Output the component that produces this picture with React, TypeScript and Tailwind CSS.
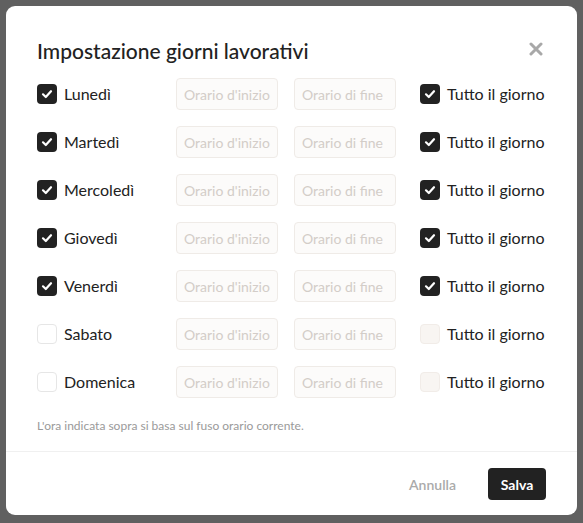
import React from "react";

const days = [
  { name: "Lunedì", on: true },
  { name: "Martedì", on: true },
  { name: "Mercoledì", on: true },
  { name: "Giovedì", on: true },
  { name: "Venerdì", on: true },
  { name: "Sabato", on: false },
  { name: "Domenica", on: false },
];

function Check({ state }: { state: "on" | "off" | "disabled" }) {
  if (state === "on") {
    return (
      <span className="flex h-5 w-5 items-center justify-center rounded-[4px] bg-[#222222]">
        <svg width="14" height="14" viewBox="0 0 14 14" fill="none">
          <path d="M3 7.3 L5.8 10 L11 4.2" stroke="white" strokeWidth="2.2" strokeLinecap="round" strokeLinejoin="round" />
        </svg>
      </span>
    );
  }
  if (state === "disabled") {
    return <span className="block h-5 w-5 rounded-[4px] border border-[#f1ece8] bg-[#f8f5f2]" />;
  }
  return <span className="block h-5 w-5 rounded-[4px] border border-[#e6e6e6] bg-white" />;
}

function TimeInput({ placeholder }: { placeholder: string }) {
  return (
    <div className="flex h-8 w-[102px] items-center overflow-hidden rounded-[4px] border border-[#efebe7] bg-[#fcfbfa] px-[7px] text-[14px] text-[#d3cdc8] whitespace-nowrap">
      {placeholder}
    </div>
  );
}

export default function App() {
  return (
    <div
      className="flex h-[523px] w-[583px] items-start justify-center bg-[#606060] pt-[6px]"
      style={{ fontFamily: "Lato, 'Noto Sans', sans-serif" }}
    >
      <div className="flex h-[509px] w-[571px] flex-col rounded-[9px] bg-white">
        <div className="flex items-center justify-between pl-[31px] pr-[34px] pt-[33px]">
          <h1 className="text-[21px] font-medium leading-6 text-[#222222]">Impostazione giorni lavorativi</h1>
          <svg width="14" height="14" viewBox="0 0 14 14" className="mt-[-4px]">
            <path d="M2 2 L12 12 M12 2 L2 12" stroke="#a8a8a8" strokeWidth="3" strokeLinecap="round" />
          </svg>
        </div>
        <div className="mt-[15px] flex flex-col gap-4 pl-[31px] pr-[31px]">
          {days.map((d) => (
            <div key={d.name} className="flex h-8 items-center">
              <div className="flex w-[139px] items-center gap-[7px]">
                <Check state={d.on ? "on" : "off"} />
                <span className="text-[16px] text-[#222222]">{d.name}</span>
              </div>
              <TimeInput placeholder="Orario d'inizio" />
              <div className="w-4" />
              <TimeInput placeholder="Orario di fine" />
              <div className="ml-[24px] flex items-center gap-[7px]">
                <Check state={d.on ? "on" : "disabled"} />
                <span className="text-[16px] text-[#222222]">Tutto il giorno</span>
              </div>
            </div>
          ))}
        </div>
        <p className="mt-[20px] pl-[31px] text-[12px] leading-4 text-[#9a9a9a]">
          L'ora indicata sopra si basa sul fuso orario corrente.
        </p>
        <div className="mt-[17px] border-t border-[#f0f0f0]" />
        <div className="flex items-center justify-end gap-8 pr-[31px] pt-4">
          <span className="text-[14px] font-semibold text-[#aaaaaa]">Annulla</span>
          <button className="flex h-8 w-[58px] items-center justify-center rounded-[4px] bg-[#222222] text-[14px] font-bold text-white">
            Salva
          </button>
        </div>
      </div>
    </div>
  );
}
